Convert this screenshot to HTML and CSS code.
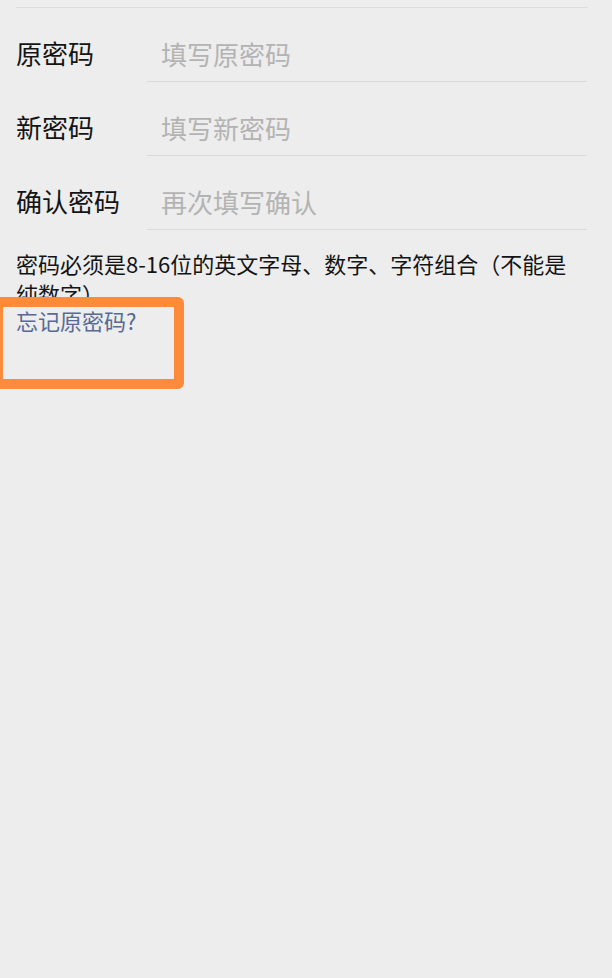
FILE: index.html
```html
<!DOCTYPE html>
<html lang="zh-CN">
<head>
<meta charset="utf-8">
<title>修改密码</title>
<link rel="stylesheet" href="styles.css">
</head>
<body>
<div class="page">
  <div class="top-line"></div>
  <div class="form">
    <div class="row">
      <div class="label">原密码</div>
      <div class="field"><input class="input" type="password" placeholder="填写原密码"></div>
    </div>
    <div class="row">
      <div class="label">新密码</div>
      <div class="field"><input class="input" type="password" placeholder="填写新密码"></div>
    </div>
    <div class="row">
      <div class="label">确认密码</div>
      <div class="field"><input class="input" type="password" placeholder="再次填写确认"></div>
    </div>
  </div>
  <p class="hint">密码必须是8-16位的英文字母、数字、字符组合（不能是纯数字）</p>
  <a class="link" href="#">忘记原密码?</a>
  <div class="highlight"></div>
</div>
</body>
</html>
```
FILE: styles.css
```css
html, body {
  margin: 0;
  padding: 0;
  background: #ededed;
}
body {
  font-family: "Noto Sans CJK SC", "Noto Sans", sans-serif;
  color: #141414;
  width: 612px;
  height: 978px;
  overflow: hidden;
}
.page {
  position: relative;
  height: 971px;
  padding-top: 7px;
}
.top-line {
  height: 1px;
  background: #dcdcdc;
  margin: 0 24px 0 16px;
}
.form {
  display: flex;
  flex-direction: column;
  padding: 0 25px 0 16px;
}
.row {
  display: flex;
  align-items: flex-start;
}
.label {
  width: 131px;
  flex: none;
  font-size: 26px;
  line-height: 30px;
  padding-top: 30px;
  color: #141414;
}
.field {
  flex: 1;
  padding: 30px 0 13px 14px;
  border-bottom: 1px solid #dadada;
  display: flex;
}
.input {
  flex: 1;
  border: none;
  outline: none;
  background: transparent;
  padding: 0;
  margin: 0;
  height: 30px;
  font-family: inherit;
  font-size: 26px;
  color: #141414;
}
.input::placeholder {
  color: #b3b3b3;
}
.hint {
  margin: 18px 25px 0 16px;
  font-size: 22px;
  line-height: 30px;
  color: #141414;
}
.link {
  display: block;
  margin: 0 0 0 16px;
  font-size: 22px;
  line-height: 24px;
  color: #576b95;
  text-decoration: none;
}
.highlight {
  position: absolute;
  left: -7px;
  top: 297px;
  width: 171px;
  height: 72px;
  border: 10px solid #fd8b3b;
  border-radius: 6px;
}
```
